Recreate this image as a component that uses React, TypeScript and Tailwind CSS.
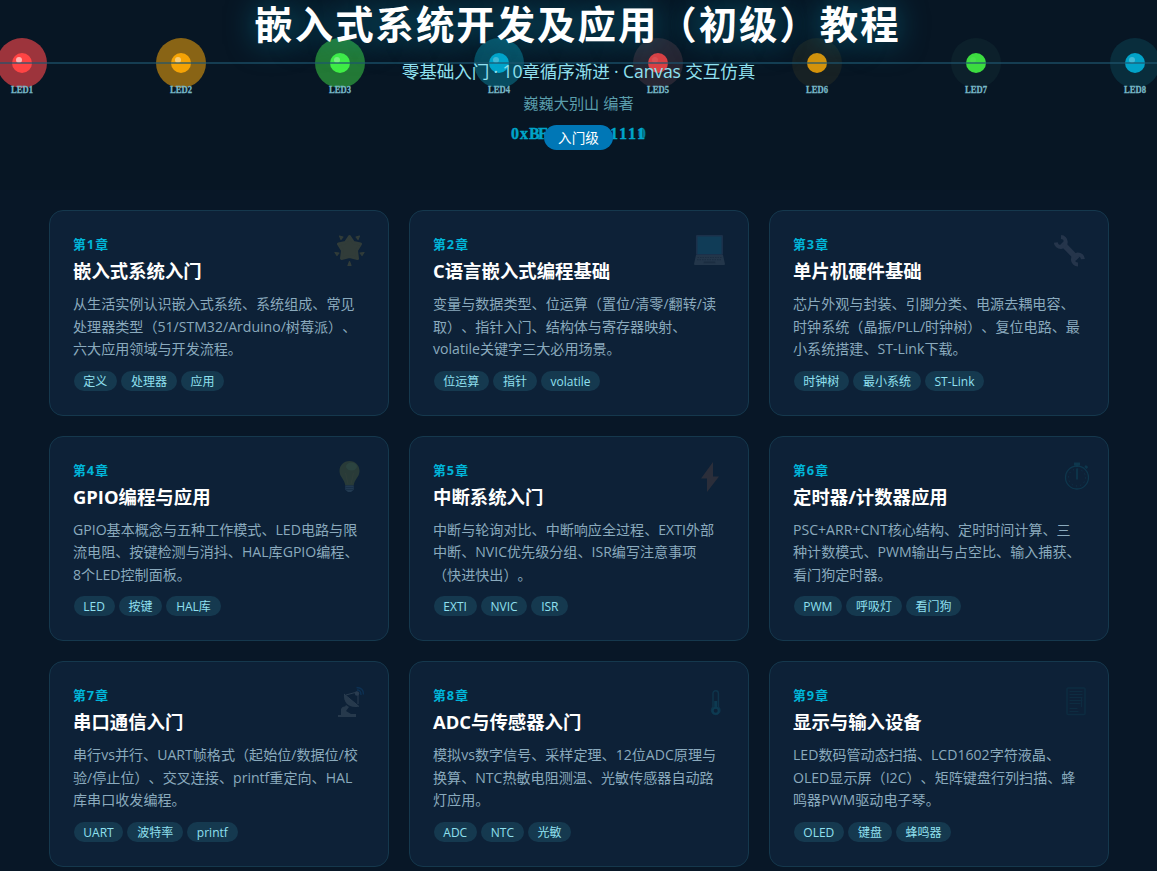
import React from "react";

const chapters = [
  {
    title: "嵌入式系统入门",
    lines: ["从生活实例认识嵌入式系统、系统组成、常见", "处理器类型（51/STM32/Arduino/树莓派）、", "六大应用领域与开发流程。"],
    tags: ["定义", "处理器", "应用"],
    icon: "star",
  },
  {
    title: "C语言嵌入式编程基础",
    lines: ["变量与数据类型、位运算（置位/清零/翻转/读", "取）、指针入门、结构体与寄存器映射、", "volatile关键字三大必用场景。"],
    tags: ["位运算", "指针", "volatile"],
    icon: "laptop",
  },
  {
    title: "单片机硬件基础",
    lines: ["芯片外观与封装、引脚分类、电源去耦电容、", "时钟系统（晶振/PLL/时钟树）、复位电路、最", "小系统搭建、ST-Link下载。"],
    tags: ["时钟树", "最小系统", "ST-Link"],
    icon: "wrench",
  },
  {
    title: "GPIO编程与应用",
    lines: ["GPIO基本概念与五种工作模式、LED电路与限", "流电阻、按键检测与消抖、HAL库GPIO编程、", "8个LED控制面板。"],
    tags: ["LED", "按键", "HAL库"],
    icon: "bulb",
  },
  {
    title: "中断系统入门",
    lines: ["中断与轮询对比、中断响应全过程、EXTI外部", "中断、NVIC优先级分组、ISR编写注意事项", "（快进快出）。"],
    tags: ["EXTI", "NVIC", "ISR"],
    icon: "bolt",
  },
  {
    title: "定时器/计数器应用",
    lines: ["PSC+ARR+CNT核心结构、定时时间计算、三", "种计数模式、PWM输出与占空比、输入捕获、", "看门狗定时器。"],
    tags: ["PWM", "呼吸灯", "看门狗"],
    icon: "timer",
  },
  {
    title: "串口通信入门",
    lines: ["串行vs并行、UART帧格式（起始位/数据位/校", "验/停止位）、交叉连接、printf重定向、HAL", "库串口收发编程。"],
    tags: ["UART", "波特率", "printf"],
    icon: "dish",
  },
  {
    title: "ADC与传感器入门",
    lines: ["模拟vs数字信号、采样定理、12位ADC原理与", "换算、NTC热敏电阻测温、光敏传感器自动路", "灯应用。"],
    tags: ["ADC", "NTC", "光敏"],
    icon: "thermo",
  },
  {
    title: "显示与输入设备",
    lines: ["LED数码管动态扫描、LCD1602字符液晶、", "OLED显示屏（I2C）、矩阵键盘行列扫描、蜂", "鸣器PWM驱动电子琴。"],
    tags: ["OLED", "键盘", "蜂鸣器"],
    icon: "page",
  },
];

const leds = [
  { x: 22, halo: "#9d343c", core: "#ff4444", shine: 0.6 },
  { x: 181, halo: "#896415", core: "#f5a305", shine: 0.45 },
  { x: 340, halo: "#237936", core: "#40ee46", shine: 0.3 },
  { x: 499, halo: "#084c60", core: "#02a5cb", shine: 0.25 },
  { x: 658, halo: "#272633", core: "#dc4043", shine: 0.08 },
  { x: 817, halo: "#172124", core: "#d5930b", shine: 0 },
  { x: 976, halo: "#0c202b", core: "#3cdc40", shine: 0.06 },
  { x: 1135, halo: "#092d3c", core: "#02a2c8", shine: 0.25 },
];

// fixed pitch for the register value
const pitch = (start: number, step: number, count: number) =>
  Array.from({ length: count }, (_, i) => start + i * step).join(" ");

function LedStrip() {
  return (
    <svg className="absolute inset-0" width="1157" height="190">
      {leds.map((led, i) => (
        <g key={led.x}>
          <circle cx={led.x} cy={63} r={25} fill={led.halo} />
          <circle cx={led.x} cy={63} r={10} fill={led.core} />
          <circle cx={led.x - 3} cy={60} r={3} fill="#fff" opacity={led.shine} />
          <text
            x={led.x - 11}
            y={93}
            textLength={22}
            lengthAdjust="spacingAndGlyphs"
            className="fill-[#78b9c8] stroke-[#78b9c8] stroke-[0.3px] font-['Liberation_Serif',serif] text-[10.5px] font-bold"
          >
            {`LED${i + 1}`}
          </text>
        </g>
      ))}
      <rect x="0" y="62" width="1157" height="2" fill="#1f5570" opacity="0.62" />
      <text
        x={pitch(511, 9, 15)}
        y="139"
        className="fill-[#00a5c9] stroke-[#00a5c9] stroke-[0.4px] font-['Liberation_Serif',serif] text-[16px] font-bold"
      >
        0xBF 0b10111111
      </text>
      <text x="638" y="139" className="fill-[#00a5c9]/70 font-['Liberation_Serif',serif] text-[16px] font-bold">
        0
      </text>
    </svg>
  );
}

function ChapterIcon({ name }: { name: string }) {
  return (
    <svg className="absolute top-[19px] right-[19px]" width="40" height="40" viewBox="0 0 40 40" fill="none">
      {name === "star" && (
        <g fill="#313c39" stroke="#313c39" strokeLinejoin="round">
          <path strokeWidth="3" d="M20.500 6.500L24.500 12.500L31.500 14L27.500 20.500L28.500 28.500L20.500 26.500L12.500 28.500L13.500 20.500L9.500 14L16.500 12.500z" />
          <path
            strokeWidth="1.200"
            d="M10.500 6l3.500 1-2 2.500zM30.500 6L27 7l2 2.500zM6 22.500l4 .5-2 2.500zM35 22.500l-4 .5 2 2.500zM20.500 31.500l1.500 4h-3z"
          />
        </g>
      )}
      {name === "laptop" && (
        <g>
          <rect x="7" y="5" width="27" height="20" rx="1" fill="#1b304a" />
          <rect x="8.500" y="6.500" width="24" height="17.500" fill="#103c57" />
          <path d="M7 25h27l2 9q0 1-1 1H6q-1 0-1-1z" fill="#23364a" />
          <path d="M8.500 27.500h24M8 29.700h25" stroke="#1b2d41" strokeWidth="1" strokeDasharray="1.500 1" />
          <path d="M15 31.500h11l.5 1.800h-12z" fill="#1b2d41" />
        </g>
      )}
      {name === "wrench" && (
        <g stroke="#25354b">
          <path d="M13 13l15.500 16" strokeWidth="5.500" />
          <path d="M12 7a5 5 0 1 1-5.200 5.500M29 34.500a5 5 0 1 1 4.900-5.300" strokeWidth="4" />
        </g>
      )}
      {name === "bulb" && (
        <g>
          <path d="M20.500 5c-6 0-10 4.500-10 10 0 6 5 8 5.800 14.500h8.400C25.500 23 30.500 21 30.500 15c0-5.500-4-10-10-10z" fill="#293b38" />
          <ellipse cx="22.500" cy="10.500" rx="5.500" ry="4" fill="#2c4440" />
          <path d="M16.500 17l2.500 11M24.500 17l-2.500 11" stroke="#2f3e3a" />
          <path d="M16.200 29.500h8.600v4.200L22 36h-3l-2.800-2.300z" fill="#213950" />
          <path d="M16.500 31.500h8M16.500 33.500h8" stroke="#182f46" />
        </g>
      )}
      {name === "bolt" && <path d="M24 6L12 22.500h6V36L30 20.500h-6z" fill="#2b2e3a" />}
      {name === "timer" && (
        <g stroke="#0e374d">
          <circle cx="28" cy="21.500" r="11.500" strokeWidth="1.300" />
          <path d="M25 8h6M28 8v3M36.500 12l1.500-2" strokeWidth="3" />
          <path d="M28 12.500v11" strokeWidth="1.700" />
          <circle cx="28" cy="21.500" r="8.500" strokeDasharray="1 3.450" />
        </g>
      )}
      {name === "dish" && (
        <g>
          <path d="M15 13c-1 9 6 15 15 12.500z" fill="#26394c" />
          <path d="M15 13l15 12.500M17 14l11-3M29 12v11" stroke="#2a3d50" strokeWidth="1" />
          <circle cx="28" cy="12.500" r="2.200" fill="#293c50" />
          <path d="M17 24l3 2-3 4 5 3h5v3H9v-2h3v-6q1-3 4-2.500z" fill="#26394c" />
          <path d="M28 9q4 0 4 5M27.500 6.500q7 0 7 7" stroke="#0d3153" strokeWidth="1.400" />
        </g>
      )}
      {name === "thermo" && (
        <g>
          <path d="M24 26V12.500a2.700 2.700 0 0 1 5.400 0V26a4.200 4.200 0 1 1-5.400 0z" stroke="#0e344b" strokeWidth="1.500" />
          <path d="M26.700 20v8" stroke="#0d3a51" strokeWidth="3" />
          <circle cx="26.700" cy="29.800" r="3" stroke="#0d3a51" strokeWidth="2" />
        </g>
      )}
      {name === "page" && (
        <g stroke="#0d2c41">
          <rect x="18" y="7" width="18" height="26.500" rx="1" strokeWidth="1.500" />
          <path d="M20.500 10.500h13M20.500 13.500h13M20.500 16.500h13M20.500 19.500h13M20.500 22.500h11M20.500 27.500h8M20.500 30.500h9M32.500 17v9" />
        </g>
      )}
    </svg>
  );
}

export default function App() {
  return (
    <div className="h-[871px] w-[1157px] overflow-hidden bg-[#081727] font-['Open_Sans','Noto_Sans_CJK_SC',sans-serif] [text-spacing-trim:space-all]">
      <header className="relative flex h-[190px] flex-col items-center overflow-hidden bg-[#071624] whitespace-nowrap">
        <LedStrip />
        <h1 className="relative h-[60px] pr-[2px] text-[38.4px] leading-[48px] font-bold tracking-[2px] text-white [text-shadow:0_0_30px_rgba(0,180,216,0.5)]">
          嵌入式系统开发及应用（初级）教程
        </h1>
        <p className="relative h-[31px] text-[17.6px] leading-[23px] tracking-[-0.13px] text-[#90e0ef]">
          零基础入门 · 10章循序渐进 · Canvas 交互仿真
        </p>
        <p className="relative h-[34px] text-[15.2px] leading-[24px] text-[#5a9eac]">巍巍大别山 编著</p>
        <span className="relative h-[25px] rounded-full bg-[#0077b6] px-[14px] text-[13.6px] leading-[25px] text-white">入门级</span>
      </header>

      <main className="mx-auto grid w-[1060px] grid-cols-3 gap-5 pt-5">
        {chapters.map((c, i) => (
          <section key={c.title} className="relative h-[205.500px] rounded-[14px] border border-[#15384d] bg-[#0d2137] pt-6 pr-6 pl-[23.500px] whitespace-nowrap">
            <ChapterIcon name={c.icon} />
            <div className="h-[22px] text-[12.8px] leading-[18px] font-bold tracking-[1px] text-[#00b4d8]">第{i + 1}章</div>
            <h2 className="h-[36px] text-[18.4px] leading-[28px] font-bold text-white">{c.title}</h2>
            <div className="text-[14.08px] leading-[22.5px] text-[#8aaabd]">
              {c.lines.map((line) => (
                <p key={line}>{line}</p>
              ))}
            </div>
            <div className="mt-[10px] flex gap-1 pl-[0.500px]">
              {c.tags.map((tag) => (
                <span key={tag} className="h-5 rounded-full bg-[#15394f] px-[9.800px] text-[12px] leading-[21px] text-[#90e0ef]">
                  {tag}
                </span>
              ))}
            </div>
          </section>
        ))}
      </main>
    </div>
  );
}
